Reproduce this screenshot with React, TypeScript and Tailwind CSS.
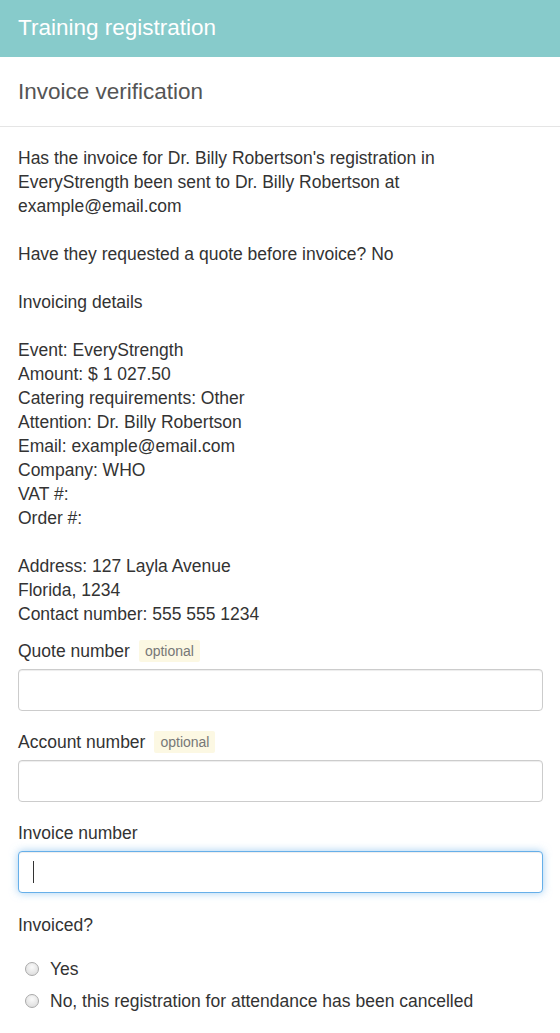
import React from 'react';

const Optional = () => (
  <span className="ml-[9px] rounded-[2px] bg-[#fcf8e3] px-1.5 py-[3px] text-[14px] leading-[16px] text-[#777]">optional</span>
);

const Field = ({ label, optional, focused }: { label: string; optional?: boolean; focused?: boolean }) => (
  <div className="mb-[19px]">
    <label className="mb-1.5 flex h-6 items-center">
      <span>{label}</span>
      {optional && <Optional />}
    </label>
    <div
      className={
        focused
          ? 'flex h-[42px] w-full items-center rounded-[4px] border border-[#66afe9] bg-white px-[14px] shadow-[inset_0_1px_1px_rgba(0,0,0,0.075),0_0_8px_rgba(102,175,233,0.6)]'
          : 'h-[42px] w-full rounded-[4px] border border-[#ccc] bg-white shadow-[inset_0_1px_1px_rgba(0,0,0,0.075)]'
      }
    >
      {focused && <span className="h-[22px] w-px bg-[#333]" />}
    </div>
  </div>
);

const Radio = ({ label }: { label: string }) => (
  <label className="flex h-6 items-center pl-[7px]">
    <span className="mr-[11px] h-[14px] w-[14px] rounded-full border border-[#aaa] bg-[radial-gradient(circle_at_50%_35%,#fafafa,#d8d8d8)]" />
    <span>{label}</span>
  </label>
);

export default function App() {
  return (
    <div className="min-h-[1033px] bg-white font-['Liberation_Sans',Arial,sans-serif] text-[17.5px] leading-6 text-[#333]">
      <div className="flex h-[57px] items-center bg-[#87cbcb] px-[18px] pb-px">
        <h1 className="text-[22.5px] text-white">Training registration</h1>
      </div>
      <div className="flex h-[70px] items-center border-b border-[#e5e5e5] px-[18px]">
        <h2 className="text-[22.5px] text-[#555]">Invoice verification</h2>
      </div>
      <div className="pl-[18px] pr-[17px] pt-[19px]">
        <p>
          Has the invoice for Dr. Billy Robertson's registration in EveryStrength been sent to Dr. Billy Robertson at
          example@email.com
        </p>
        <p className="mt-6">Have they requested a quote before invoice? No</p>
        <p className="mt-6">Invoicing details</p>
        <div className="mt-6">
          <div>Event: EveryStrength</div>
          <div>Amount: $ 1 027.50</div>
          <div>Catering requirements: Other</div>
          <div>Attention: Dr. Billy Robertson</div>
          <div>Email: example@email.com</div>
          <div>Company: WHO</div>
          <div>VAT #:</div>
          <div>Order #:</div>
        </div>
        <div className="mt-6 mb-[13px]">
          <div>Address: 127 Layla Avenue</div>
          <div>Florida, 1234</div>
          <div>Contact number: 555 555 1234</div>
        </div>
        <Field label="Quote number" optional />
        <Field label="Account number" optional />
        <Field label="Invoice number" focused />
        <div className="mt-[20px]">Invoiced?</div>
        <div className="mt-5 flex flex-col gap-2">
          <Radio label="Yes" />
          <Radio label="No, this registration for attendance has been cancelled" />
        </div>
      </div>
    </div>
  );
}
